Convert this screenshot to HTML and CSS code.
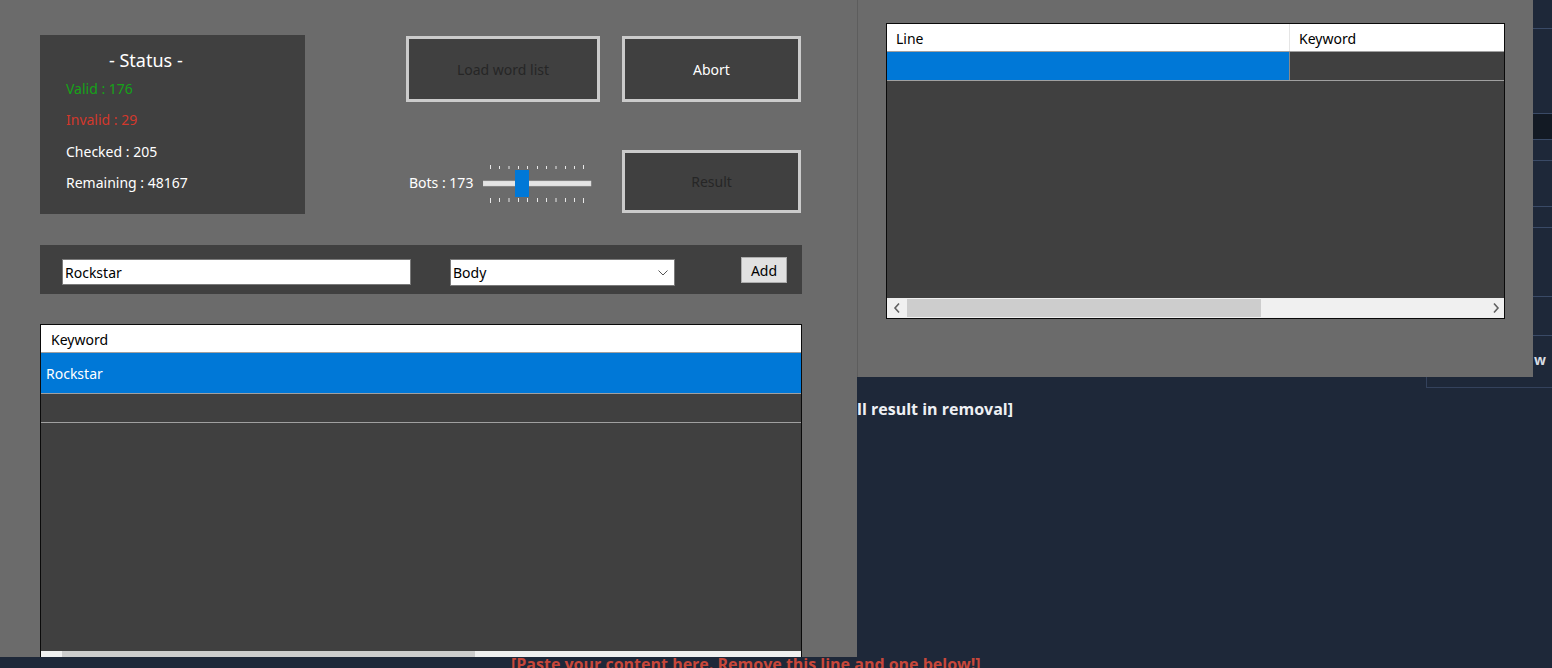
FILE: index.html
```html
<!DOCTYPE html>
<html lang="en">
<head>
<meta charset="UTF-8" />
<title>Keyword Checker</title>
<link rel="stylesheet" href="styles.css">
</head>
<body>
  <div class="desk">
    <!-- page behind the tool windows -->
    <div class="page">
      <p class="notice">[Any inappropriate content will result in removal]</p>
      <p class="paste">[Paste your content here. Remove this line and one below!]</p>
      <div class="side">
        <div class="side-row" style="height:29px"></div>
        <div class="side-row" style="height:85px"></div>
        <div class="side-row noise" style="height:26px"></div>
        <div class="side-row" style="height:21px"></div>
        <div class="side-row" style="height:46px"></div>
        <div class="side-row" style="height:21px"></div>
        <div class="side-row" style="height:69px"></div>
        <div class="side-row" style="height:39px"></div>
        <div class="side-label">w</div>
      </div>
      <div class="side-box"></div>
    </div>

    <!-- main checker window -->
    <div class="win win-main">
      <div class="top">
        <div class="status">
          <div class="status-title">- Status -</div>
          <div class="stat valid">Valid : 176</div>
          <div class="stat invalid">Invalid : 29</div>
          <div class="stat">Checked : 205</div>
          <div class="stat">Remaining : 48167</div>
        </div>
        <div class="controls">
          <button class="btn btn-off">Load word list</button>
          <button class="btn">Abort</button>
          <div class="bots">
            <span class="bots-label">Bots : 173</span>
            <svg class="slider" width="110" height="40" viewBox="0 0 110 40">
              <g stroke="#e8e8e8" stroke-width="1">
                <line x1="7.5" y1="1" x2="7.5" y2="5"/>
                <line x1="16.5" y1="2" x2="16.5" y2="5"/>
                <line x1="26" y1="2" x2="26" y2="5"/>
                <line x1="35.5" y1="2" x2="35.5" y2="5"/>
                <line x1="44.5" y1="2" x2="44.5" y2="5"/>
                <line x1="54.5" y1="2" x2="54.5" y2="5"/>
                <line x1="63.5" y1="2" x2="63.5" y2="5"/>
                <line x1="73" y1="2" x2="73" y2="5"/>
                <line x1="82.5" y1="2" x2="82.5" y2="5"/>
                <line x1="91.5" y1="2" x2="91.5" y2="5"/>
                <line x1="100.5" y1="1" x2="100.5" y2="5"/>
                <line x1="7.5" y1="34" x2="7.5" y2="39"/>
                <line x1="16.5" y1="34" x2="16.5" y2="38"/>
                <line x1="26" y1="34" x2="26" y2="38"/>
                <line x1="35.5" y1="34" x2="35.5" y2="38"/>
                <line x1="44.5" y1="34" x2="44.5" y2="38"/>
                <line x1="54.5" y1="34" x2="54.5" y2="38"/>
                <line x1="63.5" y1="34" x2="63.5" y2="38"/>
                <line x1="73" y1="34" x2="73" y2="38"/>
                <line x1="82.5" y1="34" x2="82.5" y2="38"/>
                <line x1="91.5" y1="34" x2="91.5" y2="38"/>
                <line x1="100.5" y1="34" x2="100.5" y2="39"/>
              </g>
              <rect x="0" y="17" width="108" height="5" fill="#e4e4e4" stroke="#d0d0d0" stroke-width="0.5"/>
              <rect x="32" y="6" width="14" height="27" fill="#0078d7"/>
            </svg>
          </div>
          <button class="btn btn-off">Result</button>
        </div>
      </div>

      <div class="entry">
        <input class="field" type="text" value="Rockstar" />
        <div class="dropdown">
          <span>Body</span>
          <svg width="10" height="6" viewBox="0 0 10 6"><polyline points="0.5,0.5 5,5 9.5,0.5" fill="none" stroke="#555" stroke-width="1"/></svg>
        </div>
        <button class="add">Add</button>
      </div>

      <div class="list">
        <div class="list-head">Keyword</div>
        <div class="list-row selected">Rockstar</div>
        <div class="list-row"></div>
        <div class="list-body"></div>
        <div class="hscroll hscroll-left">
          <div class="thumb"></div>
        </div>
      </div>
    </div>

    <!-- results window -->
    <div class="win win-result">
      <div class="table">
        <div class="table-head">
          <div class="col col-line">Line</div>
          <div class="col">Keyword</div>
        </div>
        <div class="table-row">
          <div class="col col-line selected"></div>
          <div class="col"></div>
        </div>
        <div class="table-body"></div>
        <div class="hscroll">
          <svg class="arrow" width="8" height="12" viewBox="0 0 8 12"><polyline points="6,1.5 2,6 6,10.5" fill="none" stroke="#606060" stroke-width="1.6"/></svg>
          <div class="track"><div class="thumb"></div></div>
          <svg class="arrow" width="8" height="12" viewBox="0 0 8 12"><polyline points="2,1.5 6,6 2,10.5" fill="none" stroke="#606060" stroke-width="1.6"/></svg>
        </div>
      </div>
    </div>
  </div>
</body>
</html>
```

FILE: styles.css
```css
* {
  box-sizing: border-box;
}
body {
  margin: 0;
  font-family: 'Segoe UI', 'Noto Sans', sans-serif;
  background: #1e2839;
  overflow: hidden;
}
.desk {
  position: relative;
  width: 1552px;
  height: 668px;
  overflow: hidden;
}

/* page underneath */
.page {
  height: 668px;
  padding-top: 398px;
  position: relative;
  font-family: 'Open Sans', sans-serif;
  font-weight: 700;
  font-size: 16px;
}
.notice {
  margin: 0;
  width: 1013px;
  text-align: right;
  color: #eef0f4;
}
.paste {
  margin: 233px 0 0 511px;
  color: #c8473a;
}
.side {
  position: absolute;
  top: 0;
  left: 1533px;
  width: 19px;
  display: flex;
  flex-direction: column;
}
.side-row {
  border-bottom: 1px solid #3a4a66;
}
.noise {
  background: #131a24;
}
.side-label {
  margin-top: 14px;
  color: #d8dce2;
  font-size: 14px;
  padding-left: 1px;
}
.side-box {
  position: absolute;
  top: 376px;
  left: 1426px;
  width: 130px;
  height: 12px;
  border-left: 1px solid #34425c;
  border-bottom: 1px solid #34425c;
}

/* windows */
.win {
  position: absolute;
  top: 0;
  background: #6b6b6b;
  overflow: hidden;
  color: #fff;
  font-size: 14px;
}
.win-main {
  left: 0;
  width: 857px;
  height: 657px;
  padding: 35px 0 0 40px;
}
.win-result {
  left: 858px;
  width: 675px;
  height: 377px;
  padding: 23px 0 0 28px;
  box-shadow: -1px 0 0 #5d5d5d;
}

.top {
  display: flex;
  height: 179px;
}
.status {
  width: 265px;
  background: #404040;
  padding: 13px 0 0 26px;
}
.status-title {
  font-size: 18px;
  margin-left: 43px;
  line-height: 24px;
  margin-bottom: 1px;
}
.stat {
  line-height: 31.3px;
}
.valid {
  color: #15a318;
}
.invalid {
  color: #d3382c;
}

.controls {
  margin-left: 101px;
  margin-top: 1px;
  display: grid;
  grid-template-columns: 194px 179px;
  grid-template-rows: 66px 63px;
  column-gap: 22px;
  row-gap: 48px;
}
.btn {
  background: #404040;
  border: 3px solid #cbcbcb;
  color: #fff;
  font-family: inherit;
  font-size: 14px;
  padding: 0;
}
.btn-off {
  color: #262626;
}
.bots {
  display: flex;
  align-items: center;
  padding-left: 3px;
  padding-top: 2px;
}
.bots-label {
  width: 74px;
}
.slider {
  display: block;
  margin-top: 2px;
}

/* keyword entry bar */
.entry {
  margin-top: 31px;
  width: 762px;
  height: 49px;
  background: #404040;
  display: flex;
  align-items: flex-start;
  padding: 14px 0 0 22px;
}
.field {
  width: 349px;
  height: 26px;
  border: 1px solid #7a7a7a;
  padding: 0 2px;
  font-family: inherit;
  font-size: 14px;
  color: #000;
  outline: none;
}
.dropdown {
  margin-left: 39px;
  width: 225px;
  height: 27px;
  background: #fff;
  border: 1px solid #7a7a7a;
  color: #000;
  display: flex;
  align-items: center;
  justify-content: space-between;
  padding: 0 6px 0 2px;
}
.add {
  margin-left: 66px;
  margin-top: -2px;
  width: 46px;
  height: 26px;
  background: #e1e1e1;
  border: 1px solid #adadad;
  font-family: inherit;
  font-size: 14px;
  color: #000;
  padding: 0;
}

/* keyword list */
.list {
  margin-top: 30px;
  width: 762px;
  height: 334px;
  border: 1px solid #0a0a0a;
  background: #404040;
  display: flex;
  flex-direction: column;
}
.list-head {
  height: 28px;
  background: #fff;
  color: #000;
  padding: 5px 0 0 10px;
  border-bottom: 1px solid #a0a0a0;
}
.list-row {
  height: 29px;
  border-bottom: 1px solid #a0a0a0;
  padding: 11px 0 0 5px;
}
.list-row.selected {
  height: 41px;
  background: #0078d7;
}
.list-body {
  flex: 1;
}
.hscroll {
  height: 6px;
  background: #f0f0f0;
  display: flex;
  align-items: center;
}
.hscroll-left {
  align-items: flex-start;
  padding-left: 21px;
}
.hscroll-left .thumb {
  width: 413px;
  height: 6px;
  background: #cdcdcd;
}

/* result table */
.table {
  width: 619px;
  height: 296px;
  border: 1px solid #0a0a0a;
  background: #404040;
  display: flex;
  flex-direction: column;
}
.table-head {
  display: flex;
  height: 28px;
  background: #fff;
  color: #000;
  border-bottom: 1px solid #a0a0a0;
}
.table-head .col {
  padding: 5px 0 0 9px;
}
.col {
  flex: 1;
}
.col-line {
  flex: 0 0 403px;
  border-right: 1px solid #e5e5e5;
}
.table-row {
  display: flex;
  height: 29px;
  border-bottom: 1px solid #a0a0a0;
}
.table-row .col-line {
  border-right: 1px solid #8a8a8a;
}
.selected {
  background: #0078d7;
}
.table-body {
  flex: 1;
}
.table .hscroll {
  height: 20px;
  padding: 0 4px 0 6px;
}
.arrow {
  display: block;
}
.track {
  flex: 1;
  height: 20px;
  padding: 1px 0 1px 6px;
}
.track .thumb {
  width: 354px;
  height: 18px;
  background: #cdcdcd;
}
```
